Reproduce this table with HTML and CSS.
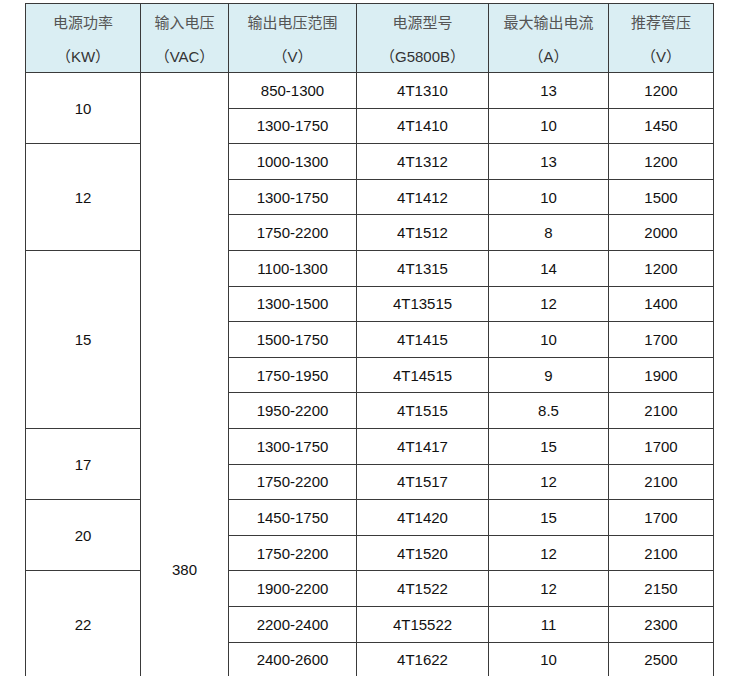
FILE: index.html
```html
<!DOCTYPE html>
<html lang="zh-CN">
<head>
<meta charset="utf-8">
<title>电源型号表</title>
<link rel="stylesheet" href="styles.css">
</head>
<body>
<table class="spec">
  <colgroup>
    <col class="c1"><col class="c2"><col class="c3"><col class="c4"><col class="c5"><col class="c6">
  </colgroup>
  <thead>
    <tr>
      <th><span class="zh">电源功率</span><span class="unit">（KW）</span></th>
      <th><span class="zh">输入电压</span><span class="unit">（VAC）</span></th>
      <th><span class="zh">输出电压范围</span><span class="unit">（V）</span></th>
      <th><span class="zh">电源型号</span><span class="unit">（G5800B）</span></th>
      <th><span class="zh">最大输出电流</span><span class="unit">（A）</span></th>
      <th><span class="zh">推荐管压</span><span class="unit">（V）</span></th>
    </tr>
  </thead>
  <tbody>
    <tr><td rowspan="2">10</td><td rowspan="17" class="input">380</td><td>850-1300</td><td>4T1310</td><td>13</td><td>1200</td></tr>
    <tr><td>1300-1750</td><td>4T1410</td><td>10</td><td>1450</td></tr>
    <tr><td rowspan="3">12</td><td>1000-1300</td><td>4T1312</td><td>13</td><td>1200</td></tr>
    <tr><td>1300-1750</td><td>4T1412</td><td>10</td><td>1500</td></tr>
    <tr><td>1750-2200</td><td>4T1512</td><td>8</td><td>2000</td></tr>
    <tr><td rowspan="5">15</td><td>1100-1300</td><td>4T1315</td><td>14</td><td>1200</td></tr>
    <tr><td>1300-1500</td><td>4T13515</td><td>12</td><td>1400</td></tr>
    <tr><td>1500-1750</td><td>4T1415</td><td>10</td><td>1700</td></tr>
    <tr><td>1750-1950</td><td>4T14515</td><td>9</td><td>1900</td></tr>
    <tr><td>1950-2200</td><td>4T1515</td><td>8.5</td><td>2100</td></tr>
    <tr><td rowspan="2">17</td><td>1300-1750</td><td>4T1417</td><td>15</td><td>1700</td></tr>
    <tr><td>1750-2200</td><td>4T1517</td><td>12</td><td>2100</td></tr>
    <tr><td rowspan="2">20</td><td>1450-1750</td><td>4T1420</td><td>15</td><td>1700</td></tr>
    <tr><td>1750-2200</td><td>4T1520</td><td>12</td><td>2100</td></tr>
    <tr><td rowspan="3">22</td><td>1900-2200</td><td>4T1522</td><td>12</td><td>2150</td></tr>
    <tr><td>2200-2400</td><td>4T15522</td><td>11</td><td>2300</td></tr>
    <tr><td>2400-2600</td><td>4T1622</td><td>10</td><td>2500</td></tr>
  </tbody>
</table>
</body>
</html>
```
FILE: styles.css
```css
html, body {
  margin: 0;
  padding: 0;
  background: #ffffff;
}
body {
  padding: 3px 0 0 25px;
  font-family: "Liberation Sans", "Noto Sans CJK SC", Arial, sans-serif;
}
.spec {
  border-collapse: collapse;
  table-layout: fixed;
  width: 689px;
  font-size: 15px;
  color: #111111;
}
.c1 { width: 115px; }
.c2 { width: 88px; }
.c3 { width: 128px; }
.c4 { width: 132px; }
.c5 { width: 120px; }
.c6 { width: 105px; }
.spec th,
.spec td {
  border: 1px solid #3a3a3a;
  padding: 0;
  text-align: center;
  vertical-align: middle;
  line-height: 17px;
}
.spec th {
  background: #daeef3;
  font-weight: normal;
  height: 68px;
}
.spec th .zh,
.spec th .unit {
  display: block;
}
.spec th .zh {
  color: #555555;
  line-height: 38px;
}
.spec th .unit {
  color: #333333;
  line-height: 30px;
}
.spec tbody tr {
  height: 35.6px;
}
.spec td.input {
  vertical-align: top;
  padding-top: 488px;
}
```
